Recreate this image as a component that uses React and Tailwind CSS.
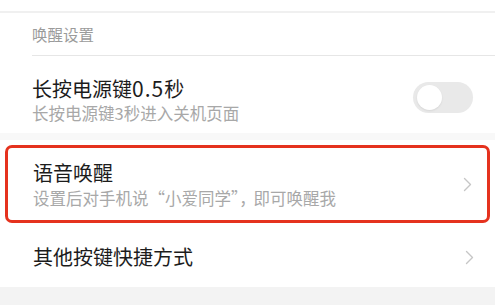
const Chevron = () => (
  <svg width="9" height="15" viewBox="0 0 9 15" fill="none">
    <polyline points="1.5,1.5 7.5,7.5 1.5,13.5" stroke="#c6c6c6" strokeWidth="1.4" strokeLinecap="round" strokeLinejoin="round" />
  </svg>
);

const Toggle = () => (
  <div className="w-[60px] h-[31px] rounded-full bg-[#e9e9e9] flex items-center">
    <div className="w-[25px] h-[25px] rounded-full bg-white ml-[4px] shadow-[0_1px_2px_rgba(0,0,0,0.08)]" />
  </div>
);

export default function App() {
  return (
    <div
      className="w-[495px] h-[305px] bg-white flex flex-col overflow-hidden"
      style={{ fontFamily: '"Noto Sans CJK SC", "Noto Sans", sans-serif' }}
    >
      {/* top edge of previous block */}
      <div className="h-[11px]" />
      <div className="h-[2px] bg-[#f0f0f0]" />

      {/* section header */}
      <div className="h-[43px] ml-[32px] flex items-center border-b border-[#e6e6e6] text-[15.5px] text-[#9b9b9b] leading-none pt-[2px]">
        唤醒设置
      </div>

      {/* 长按电源键 */}
      <div className="h-[77px] flex items-start pl-[32px] pr-[22px] pt-[20px]">
        <div className="flex-1">
          <div className="text-[20px] leading-[24px] text-[#1c1c1c]">
            长按电源键<span className="text-[21px] tracking-[1px]">0.5</span>秒
          </div>
          <div className="text-[16.5px] leading-[20px] mt-[2px] text-[#a8a8a8]">长按电源键3秒进入关机页面</div>
        </div>
        <div className="mt-[6px]">
          <Toggle />
        </div>
      </div>

      <div className="h-[7px] bg-[#f8f8f8]" />

      {/* 语音唤醒 (highlighted) */}
      <div className="mx-[5px] mt-[5px] h-[78px] border-[3px] border-[#e5321e] rounded-[7px] flex items-center pl-[25px] pr-[15px]">
        <div className="flex-1">
          <div className="text-[20px] leading-[24px] text-[#1c1c1c]">语音唤醒</div>
          <div className="text-[16.5px] leading-[20px] mt-[3px] text-[#a8a8a8]">
            设置后对手机说“小爱同学”<span className="tracking-[-6px]">，</span> 即可唤醒我
          </div>
        </div>
        <Chevron />
      </div>

      {/* 其他按键快捷方式 */}
      <div className="h-[64px] flex items-center pl-[33px] pr-[21px] pt-[4px]">
        <div className="flex-1 text-[20px] leading-[24px] text-[#1c1c1c]">其他按键快捷方式</div>
        <Chevron />
      </div>

      <div className="flex-1 bg-[#f3f3f3]" />
    </div>
  );
}
